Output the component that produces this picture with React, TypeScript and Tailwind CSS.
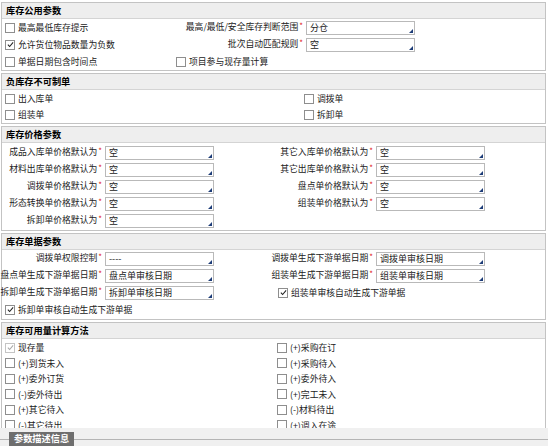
import React from "react";

function Cb({ checked, disabled }: { checked?: boolean; disabled?: boolean }) {
  return (
    <span
      className={
        "inline-flex w-[10px] h-[10px] border items-center justify-center shrink-0 bg-white " +
        (disabled ? "border-[#c4c4c4]" : "border-[#8e8e8e]")
      }
    >
      {checked && (
        <svg viewBox="0 0 8 8" className="w-[7px] h-[7px]">
          <path
            d="M1 4.2 L3 6.3 L7 1.6"
            stroke={disabled ? "#a8a8a8" : "#222"}
            strokeWidth="1.2"
            fill="none"
          />
        </svg>
      )}
    </span>
  );
}

function CheckItem({
  label,
  checked,
  disabled,
  className = "",
}: {
  label: string;
  checked?: boolean;
  disabled?: boolean;
  className?: string;
}) {
  return (
    <div className={"flex items-center gap-[3px] " + className}>
      <Cb checked={checked} disabled={disabled} />
      <span className="whitespace-nowrap">{label}</span>
    </div>
  );
}

function Input({ value, className = "" }: { value: string; className?: string }) {
  return (
    <div
      className={
        "relative h-[14px] border border-[#b9b9b9] bg-white pl-[3px] flex items-center shrink-0 " +
        className
      }
    >
      <span className="whitespace-nowrap leading-none text-[9px]">{value}</span>
      <span className="absolute bottom-[1px] right-[1px] w-0 h-0 border-l-[4px] border-l-transparent border-b-[4px] border-b-[#1d3c78]" />
    </div>
  );
}

function Label({ text, className = "" }: { text: string; className?: string }) {
  return (
    <div className={"flex justify-end items-start shrink-0 whitespace-nowrap " + className}>
      <span className="leading-none">{text}</span>
      <span className="text-[#e02020] text-[8px] leading-none -mt-[1px] ml-[1px]">*</span>
    </div>
  );
}

function Field({ label, value }: { label: string; value: string }) {
  return (
    <div className="flex items-center">
      <Label text={label} className="w-[100px]" />
      <Input value={value} className="ml-[3px] w-[109px]" />
    </div>
  );
}

function Panel({
  title,
  children,
  className = "",
}: {
  title: string;
  children: React.ReactNode;
  className?: string;
}) {
  return (
    <div className={"border border-[#c3c3c3] bg-white " + className}>
      <div className="h-[16px] bg-[#eeeeee] border-b border-[#d4d4d4] flex items-center pl-[4px] font-bold text-black text-[9.2px]">
        {title}
      </div>
      {children}
    </div>
  );
}

export default function App() {
  return (
    <div className="w-[548px] h-[446px] bg-white overflow-hidden font-['Noto_Sans_CJK_SC','Noto_Sans',sans-serif] text-[8.8px] text-[#222]">
      <div className="h-[428px] overflow-hidden pt-[2px] pl-[1px] flex flex-col gap-[2px]">
        {/* 库存公用参数 */}
        <Panel title="库存公用参数" className="w-[545px]">
          <div className="flex flex-col">
            <div className="h-[17px] flex items-center">
              <div className="w-[172px] pl-[3px]">
                <CheckItem label="最高最低库存提示" />
              </div>
              <Label text="最高/最低/安全库存判断范围" className="w-[129px]" />
              <Input value="分仓" className="ml-[3px] w-[109px]" />
            </div>
            <div className="h-[17px] flex items-center">
              <div className="w-[172px] pl-[3px]">
                <CheckItem label="允许货位物品数量为负数" checked />
              </div>
              <Label text="批次自动匹配规则" className="w-[129px]" />
              <Input value="空" className="ml-[3px] w-[109px]" />
            </div>
            <div className="h-[17px] flex items-center">
              <div className="w-[174px] pl-[3px]">
                <CheckItem label="单据日期包含时间点" />
              </div>
              <CheckItem label="项目参与现存量计算" />
            </div>
          </div>
        </Panel>

        {/* 负库存不可制单 */}
        <Panel title="负库存不可制单" className="w-[545px]">
          <div className="flex flex-col pt-[1px]">
            <div className="h-[16px] flex items-center">
              <div className="w-[302px] pl-[3px]">
                <CheckItem label="出入库单" />
              </div>
              <CheckItem label="调拨单" />
            </div>
            <div className="h-[16px] flex items-center">
              <div className="w-[302px] pl-[3px]">
                <CheckItem label="组装单" />
              </div>
              <CheckItem label="拆卸单" />
            </div>
          </div>
        </Panel>

        {/* 库存价格参数 */}
        <Panel title="库存价格参数" className="w-[545px]">
          <div className="grid grid-cols-[271px_1fr] pt-[1px] pb-[1px]">
            <div className="flex flex-col">
              <div className="h-[17px] flex items-center"><Field label="成品入库单价格默认为" value="空" /></div>
              <div className="h-[17px] flex items-center"><Field label="材料出库单价格默认为" value="空" /></div>
              <div className="h-[17px] flex items-center"><Field label="调拨单价格默认为" value="空" /></div>
              <div className="h-[17px] flex items-center"><Field label="形态转换单价格默认为" value="空" /></div>
              <div className="h-[17px] flex items-center"><Field label="拆卸单价格默认为" value="空" /></div>
            </div>
            <div className="flex flex-col">
              <div className="h-[17px] flex items-center"><Field label="其它入库单价格默认为" value="空" /></div>
              <div className="h-[17px] flex items-center"><Field label="其它出库单价格默认为" value="空" /></div>
              <div className="h-[17px] flex items-center"><Field label="盘点单价格默认为" value="空" /></div>
              <div className="h-[17px] flex items-center"><Field label="组装单价格默认为" value="空" /></div>
            </div>
          </div>
        </Panel>

        {/* 库存单据参数 */}
        <Panel title="库存单据参数" className="w-[545px]">
          <div className="grid grid-cols-[271px_1fr] pb-[1px]">
            <div className="h-[17px] flex items-center"><Field label="调拨单权限控制" value="----" /></div>
            <div className="h-[17px] flex items-center"><Field label="调拨单生成下游单据日期" value="调拨单审核日期" /></div>
            <div className="h-[17px] flex items-center"><Field label="盘点单生成下游单据日期" value="盘点单审核日期" /></div>
            <div className="h-[17px] flex items-center"><Field label="组装单生成下游单据日期" value="组装单审核日期" /></div>
            <div className="h-[17px] flex items-center"><Field label="拆卸单生成下游单据日期" value="拆卸单审核日期" /></div>
            <div className="h-[17px] flex items-center pl-[5px]">
              <CheckItem label="组装单审核自动生成下游单据" checked />
            </div>
            <div className="h-[17px] flex items-center pl-[3px] col-span-2">
              <CheckItem label="拆卸单审核自动生成下游单据" checked />
            </div>
          </div>
        </Panel>

        {/* 库存可用量计算方法 */}
        <Panel title="库存可用量计算方法" className="w-[545px]">
          <div className="grid grid-cols-[275px_1fr] auto-rows-[15.5px] pt-[1px]">
            <div className="flex items-center pl-[3px]"><CheckItem label="现存量" checked disabled /></div>
            <div className="flex items-center"><CheckItem label="(+)采购在订" /></div>
            <div className="flex items-center pl-[3px]"><CheckItem label="(+)到货未入" /></div>
            <div className="flex items-center"><CheckItem label="(+)采购待入" /></div>
            <div className="flex items-center pl-[3px]"><CheckItem label="(+)委外订货" /></div>
            <div className="flex items-center"><CheckItem label="(+)委外待入" /></div>
            <div className="flex items-center pl-[3px]"><CheckItem label="(-)委外待出" /></div>
            <div className="flex items-center"><CheckItem label="(+)完工未入" /></div>
            <div className="flex items-center pl-[3px]"><CheckItem label="(+)其它待入" /></div>
            <div className="flex items-center"><CheckItem label="(-)材料待出" /></div>
            <div className="flex items-center pl-[3px]"><CheckItem label="(-)其它待出" /></div>
            <div className="flex items-center"><CheckItem label="(+)调入在途" /></div>
          </div>
        </Panel>
      </div>

      {/* 参数描述信息 */}
      <div className="relative h-[18px] bg-[#f0f0f0]">
        <div className="absolute left-0 right-0 top-[11px] border-t border-[#b4b4b4]" />
        <div className="absolute left-[9px] top-[4px] h-[14px] px-[5px] bg-[#6e6e6e] text-white font-bold text-[9.2px] flex items-center">
          参数描述信息
        </div>
      </div>
    </div>
  );
}
